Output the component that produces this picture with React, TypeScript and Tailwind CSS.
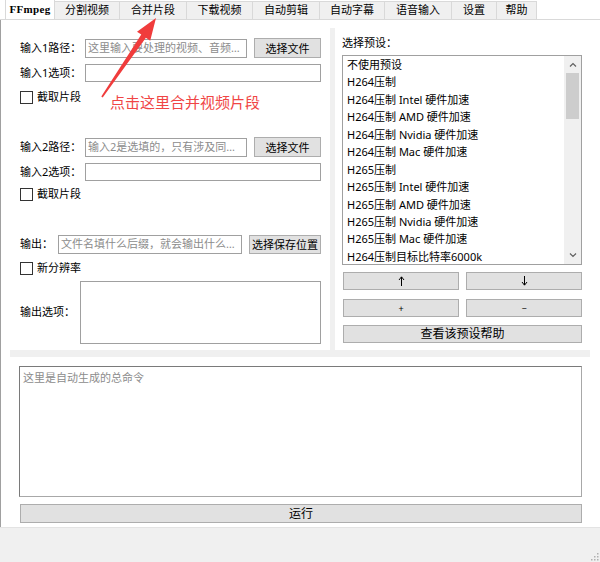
import React from "react";

const FONT = "font-['Noto_Sans','Noto_Sans_CJK_SC',sans-serif]";

const tabs = [
  { label: "分割视频", w: "w-[65px]" },
  { label: "合并片段", w: "w-[67px]" },
  { label: "下载视频", w: "w-[66px]" },
  { label: "自动剪辑", w: "w-[67px]" },
  { label: "自动字幕", w: "w-[65px]" },
  { label: "语音输入", w: "w-[67px]" },
  { label: "设置", w: "w-[45px]" },
  { label: "帮助", w: "w-[40px]" },
];

const presets = [
  "不使用预设",
  "H264压制",
  "H264压制 Intel 硬件加速",
  "H264压制 AMD 硬件加速",
  "H264压制 Nvidia 硬件加速",
  "H264压制 Mac 硬件加速",
  "H265压制",
  "H265压制 Intel 硬件加速",
  "H265压制 AMD 硬件加速",
  "H265压制 Nvidia 硬件加速",
  "H265压制 Mac 硬件加速",
  "H264压制目标比特率6000k",
];

function TextBox({ w, h, text }: { w: string; h: string; text?: string }) {
  return (
    <div
      className={`${w} ${h} border border-[#a0a0a0] bg-white px-[2px] text-[11px] leading-[16px] text-[#8c8c8c] whitespace-nowrap overflow-hidden`}
    >
      {text}
    </div>
  );
}

function Btn({ w, h, children }: { w: string; h: string; children: React.ReactNode }) {
  return (
    <div
      className={`${w} ${h} border border-[#adadad] bg-[#e1e1e1] flex items-center justify-center text-[11px] text-black leading-none`}
    >
      {children}
    </div>
  );
}

function Check({ label }: { label: string }) {
  return (
    <div className="flex items-center h-[14px] text-[11px]">
      <div className="w-[13px] h-[13px] border border-[#333] bg-white" />
      <span className="ml-[4px]">{label}</span>
    </div>
  );
}

function ThinArrow({ down }: { down?: boolean }) {
  return (
    <svg width="7" height="10" viewBox="0 0 7 10" className={down ? "rotate-180" : ""}>
      <path d="M3.5 1 L3.5 10" stroke="#000" strokeWidth="1" />
      <path d="M1 4 L3.5 0.8 L6 4" fill="none" stroke="#000" strokeWidth="1" />
    </svg>
  );
}

export default function App() {
  return (
    <div className={`w-[600px] h-[562px] bg-white flex flex-col relative overflow-hidden text-black ${FONT}`}>
      {/* tab strip */}
      <div className="h-[20px] flex items-end pl-[5px] border-b border-[#d9d9d9] bg-white">
        <div className="w-[50px] h-[20px] bg-white border border-b-0 border-[#d9d9d9] flex items-center justify-center font-['Liberation_Serif',serif] font-bold text-[11px] tracking-[0.3px]">
          FFmpeg
        </div>
        {tabs.map((t) => (
          <div
            key={t.label}
            className={`${t.w} h-[18px] bg-[#f0f0f0] border-t border-r border-[#d9d9d9] flex items-center justify-center text-[11px]`}
          >
            {t.label}
          </div>
        ))}
      </div>

      {/* tab page */}
      <div className="flex-1 flex flex-col border-l border-[#a0a0a0] pt-[8px]">
        <div className="ml-[9px] w-[580px] h-[329px] bg-[#f0f0f0] flex items-start">
          {/* left panel */}
          <div className="w-[320px] h-[322px] bg-white flex flex-col pl-[10px] pt-[10px] text-[11px]">
            <div className="flex items-center h-[20px]">
              <span className="w-[65px]">输入1路径：</span>
              <TextBox w="w-[162px]" h="h-[19px]" text="这里输入要处理的视频、音频…" />
              <div className="ml-[7px]">
                <Btn w="w-[67px]" h="h-[20px]">选择文件</Btn>
              </div>
            </div>
            <div className="flex items-center h-[18px] mt-[6px]">
              <span className="w-[65px]">输入1选项：</span>
              <TextBox w="w-[236px]" h="h-[18px]" />
            </div>
            <div className="mt-[8px]">
              <Check label="截取片段" />
            </div>

            <div className="flex items-center h-[20px] mt-[33px]">
              <span className="w-[65px]">输入2路径：</span>
              <TextBox w="w-[162px]" h="h-[19px]" text="输入2是选填的，只有涉及同…" />
              <div className="ml-[7px]">
                <Btn w="w-[67px]" h="h-[20px]">选择文件</Btn>
              </div>
            </div>
            <div className="flex items-center h-[18px] mt-[6px]">
              <span className="w-[65px]">输入2选项：</span>
              <TextBox w="w-[236px]" h="h-[18px]" />
            </div>
            <div className="mt-[6px]">
              <Check label="截取片段" />
            </div>

            <div className="flex items-center h-[19px] mt-[34px]">
              <span className="w-[38px]">输出：</span>
              <TextBox w="w-[184px]" h="h-[19px]" text="文件名填什么后缀，就会输出什么…" />
              <div className="ml-[7px]">
                <Btn w="w-[72px]" h="h-[19px]">选择保存位置</Btn>
              </div>
            </div>
            <div className="mt-[7px]">
              <Check label="新分辨率" />
            </div>
            <div className="flex items-center mt-[6px]">
              <span className="w-[60px]">输出选项：</span>
              <div className="w-[241px] h-[63px] border border-[#a0a0a0] bg-white" />
            </div>
          </div>

          {/* right panel */}
          <div className="w-[255px] h-[322px] ml-[5px] bg-white flex flex-col pl-[7px] pt-[8px] text-[11px]">
            <div className="h-[14px] leading-[14px]">选择预设：</div>
            <div className="mt-[5px] w-[240px] h-[210px] border border-[#a0a0a0] bg-white flex">
              <div className="flex-1 flex flex-col pl-[4px] overflow-hidden">
                {presets.map((p) => (
                  <div key={p} className="h-[17.45px] leading-[17.45px] whitespace-nowrap">
                    {p}
                  </div>
                ))}
              </div>
              <div className="w-[17px] bg-[#f0f0f0] flex flex-col items-center">
                <div className="h-[17px] flex items-center justify-center">
                  <svg width="8" height="5" viewBox="0 0 8 5">
                    <path d="M1 4.5 L4 1.5 L7 4.5" fill="none" stroke="#606060" strokeWidth="1.2" />
                  </svg>
                </div>
                <div className="w-[13px] h-[46px] bg-[#cdcdcd]" />
                <div className="flex-1" />
                <div className="h-[17px] flex items-center justify-center">
                  <svg width="8" height="5" viewBox="0 0 8 5">
                    <path d="M1 0.5 L4 3.5 L7 0.5" fill="none" stroke="#606060" strokeWidth="1.2" />
                  </svg>
                </div>
              </div>
            </div>
            <div className="flex gap-[7px] mt-[7px] ml-[1px]">
              <Btn w="w-[116px]" h="h-[18px]">
                <ThinArrow />
              </Btn>
              <Btn w="w-[116px]" h="h-[18px]">
                <ThinArrow down />
              </Btn>
            </div>
            <div className="flex gap-[7px] mt-[9px] ml-[1px]">
              <Btn w="w-[116px]" h="h-[18px]">
                <span className="text-[9px]">+</span>
              </Btn>
              <Btn w="w-[116px]" h="h-[18px]">
                <span className="text-[9px]">−</span>
              </Btn>
            </div>
            <div className="mt-[8px] ml-[1px]">
              <Btn w="w-[239px]" h="h-[18px]">
                <span className="text-[12px]">查看该预设帮助</span>
              </Btn>
            </div>
          </div>
        </div>

        {/* command box */}
        <div className="ml-[18px] mt-[9px] w-[563px] h-[131px] border border-[#7a7a7a] border-r-[#a8a8a8] border-b-[#a8a8a8] bg-white px-[3px] pt-[3px] text-[11px] leading-[16px] text-[#8c8c8c]">
          这里是自动生成的总命令
        </div>
        <div className="ml-[19px] mt-[7px]">
          <Btn w="w-[562px]" h="h-[19px]">
            <span className="text-[12px]">运行</span>
          </Btn>
        </div>
        <div className="flex-1" />
      </div>

      {/* status strip */}
      <div className="h-[35px] bg-[#f0f0f0] border-t border-[#e3e3e3] flex items-end justify-end pr-[1px] pb-[1px]">
        <svg width="10" height="10" viewBox="0 0 10 10">
          <rect x="8" y="2" width="1.5" height="1.5" fill="#b0b0b0" />
          <rect x="5" y="5" width="1.5" height="1.5" fill="#b0b0b0" />
          <rect x="8" y="5" width="1.5" height="1.5" fill="#b0b0b0" />
          <rect x="2" y="8" width="1.5" height="1.5" fill="#b0b0b0" />
          <rect x="5" y="8" width="1.5" height="1.5" fill="#b0b0b0" />
          <rect x="8" y="8" width="1.5" height="1.5" fill="#b0b0b0" />
        </svg>
      </div>

      {/* annotation overlay */}
      <svg className="absolute left-0 top-0 pointer-events-none" width="600" height="562" viewBox="0 0 600 562">
        <polygon
          points="156,18 150.2,40.7 145.9,37.8 102.7,97.5 101.3,96.5 141.3,34.6 137,31.7"
          fill="#f03c3c"
        />
      </svg>
      <div className="absolute left-[110px] top-[94px] text-[15px] leading-[16px] text-[#f04545] whitespace-nowrap">
        点击这里合并视频片段
      </div>
    </div>
  );
}
